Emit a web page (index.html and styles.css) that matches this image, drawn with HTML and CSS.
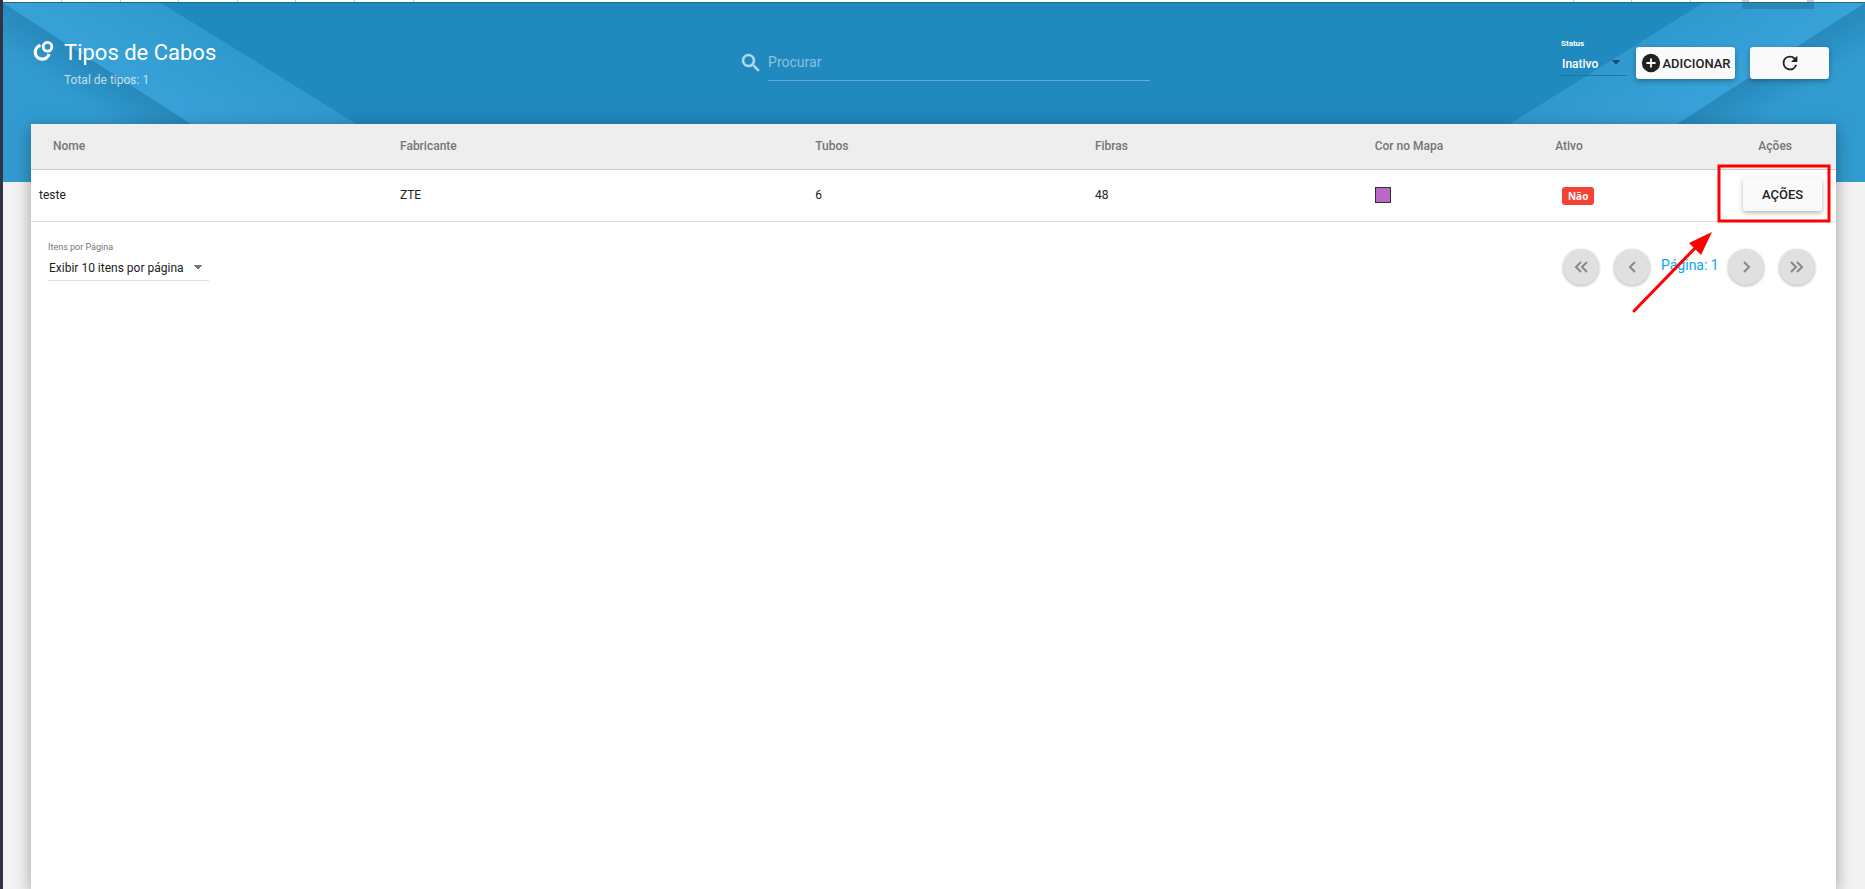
FILE: index.html
```html
<!DOCTYPE html>
<html lang="pt-BR">
<head>
<meta charset="utf-8">
<title>Tipos de Cabos</title>
<link rel="stylesheet" href="styles.css">
</head>
<body>
<div class="rail"></div>
<div class="page">
  <div class="strip">
    <svg width="420" height="2" aria-hidden="true"><path d="M58.500 0V2M117.500 0V2M175.500 0V2M234.500 0V2M292.500 0V2M351.500 0V2M410.500 0V2" stroke="#ccc"/></svg>
    <svg width="300" height="2" aria-hidden="true"><path d="M8.500 0V2M66.500 0V2M125.500 0V2" stroke="#ccc"/><path d="M177 0H184V2H177ZM242 0H249V2H242Z" fill="#ccc"/></svg>
  </div>
  <header class="hero">
    <svg class="band band-left" width="360" height="179" viewBox="0 0 360 179" aria-hidden="true">
      <defs>
        <linearGradient id="fold-l" gradientUnits="userSpaceOnUse" x1="95" y1="60" x2="71" y2="97">
          <stop offset="0" stop-color="#2788bb"/><stop offset="1" stop-color="#319bd0"/>
        </linearGradient>
        <linearGradient id="lit-l" gradientUnits="userSpaceOnUse" x1="250" y1="60" x2="205" y2="130">
          <stop offset="0" stop-color="#3099ce"/><stop offset="1" stop-color="#38a1d7"/>
        </linearGradient>
      </defs>
      <path d="M0 0H158L360 125V179H0Z" fill="url(#lit-l)"/>
      <path d="M0 0L278 179H0Z" fill="url(#fold-l)"/>
    </svg>
    <svg class="band band-right" width="360" height="179" viewBox="0 0 360 179" aria-hidden="true">
      <defs>
        <linearGradient id="fold-r" gradientUnits="userSpaceOnUse" x1="265" y1="60" x2="289" y2="97">
          <stop offset="0" stop-color="#2788bb"/><stop offset="1" stop-color="#319bd0"/>
        </linearGradient>
        <linearGradient id="lit-r" gradientUnits="userSpaceOnUse" x1="110" y1="60" x2="155" y2="130">
          <stop offset="0" stop-color="#3099ce"/><stop offset="1" stop-color="#38a1d7"/>
        </linearGradient>
      </defs>
      <path d="M360 0H198L0 124V179H360Z" fill="url(#lit-r)"/>
      <path d="M360 0L82 179H360Z" fill="url(#fold-r)"/>
      <path d="M237 0H309V6H237Z" fill="#2d86b5"/>
    </svg>
    <div class="brand">
      <svg class="logo" width="22" height="22" viewBox="0 0 22 22" fill="none" stroke="#fff" aria-hidden="true">
        <circle cx="14.500" cy="6.800" r="4.400" stroke-width="2.800"/>
        <path d="M7.500 5.400A7 7 0 1 0 16 14" stroke-width="3.200"/>
      </svg>
      <div class="titles">
        <h1>Tipos de Cabos</h1>
        <p>Total de tipos: 1</p>
      </div>
    </div>
    <div class="search">
      <svg width="24" height="24" viewBox="0 0 24 24" fill="#b9dbed" stroke="#b9dbed" stroke-width=".5" aria-hidden="true"><path d="M15.500 14h-.79l-.28-.27A6.471 6.471 0 0 0 16 9.500 6.500 6.500 0 1 0 9.500 16c1.610 0 3.090-.59 4.230-1.570l.27.28v.79l5 4.990L20.490 19l-4.990-5zm-6 0C7.010 14 5 11.990 5 9.500S7.010 5 9.500 5 14 7.010 14 9.500 11.990 14 9.500 14z"/></svg>
      <input type="text" placeholder="Procurar" aria-label="Procurar">
    </div>
    <div class="tools">
      <div class="status">
        <label for="status">Status</label>
        <select id="status"><option>Inativo</option><option>Ativo</option></select>
      </div>
      <button class="btn add" type="button">
        <svg width="22" height="22" viewBox="0 0 24 24" fill="#212121" aria-hidden="true"><path d="M12 2a10 10 0 1 0 0 20 10 10 0 0 0 0-20zm5 11h-4v4h-2v-4H7v-2h4V7h2v4h4z"/></svg>
        ADICIONAR
      </button>
      <button class="btn refresh" type="button" aria-label="Atualizar">
        <svg width="22" height="22" viewBox="0 0 24 24" fill="#212121" aria-hidden="true"><path d="M17.650 6.350A7.958 7.958 0 0 0 12 4a8 8 0 1 0 7.730 10h-2.080A6 6 0 1 1 12 6c1.660 0 3.140.69 4.220 1.780L13 11h7V4z"/></svg>
      </button>
    </div>
  </header>
  <main class="card">
    <table>
      <colgroup><col class="c-name"><col class="c-maker"><col class="c-num"><col class="c-num"><col class="c-color"><col class="c-color"><col></colgroup>
      <thead>
        <tr><th class="first">Nome</th><th>Fabricante</th><th>Tubos</th><th>Fibras</th><th>Cor no Mapa</th><th>Ativo</th><th class="last">Ações</th></tr>
      </thead>
      <tbody>
        <tr><td>teste</td><td>ZTE</td><td>6</td><td>48</td><td><span class="swatch"></span></td><td><span class="badge">Não</span></td><td class="last"><button class="btn actions" type="button">AÇÕES</button></td></tr>
      </tbody>
    </table>
    <div class="footer">
      <div class="per-page">
        <label for="per-page">Itens por Página</label>
        <select id="per-page"><option>Exibir 10 itens por página</option></select>
      </div>
      <nav class="pager">
        <button type="button" aria-label="Primeira"><svg width="24" height="24" viewBox="0 0 24 24"><path d="M12 7L7 12L12 17M18 7L13 12L18 17"/></svg></button>
        <button type="button" aria-label="Anterior"><svg width="24" height="24" viewBox="0 0 24 24"><path d="M15 7L10 12L15 17"/></svg></button>
        <span>Página: 1</span>
        <button type="button" aria-label="Próxima"><svg width="24" height="24" viewBox="0 0 24 24"><path d="M10 7L15 12L10 17"/></svg></button>
        <button type="button" aria-label="Última"><svg width="24" height="24" viewBox="0 0 24 24"><path d="M6 7L11 12L6 17M12 7L17 12L12 17"/></svg></button>
      </nav>
    </div>
    <svg class="mark" width="206" height="152" viewBox="0 0 206 152" aria-hidden="true">
      <rect x="89" y="4" width="110" height="55" fill="none" stroke="#f00" stroke-width="3"/>
      <path d="M4 149L68 83" stroke="#f00" stroke-width="3" stroke-linecap="round"/>
      <path d="M82 70L59 81L71 93Z" fill="#f00"/>
    </svg>
  </main>
</div>
</body>
</html>
```
FILE: styles.css
```css
* { box-sizing: border-box; }
body {
  margin: 0;
  min-height: 100vh;
  display: flex;
  background: #f3f3f3;
  color: #212121;
  font-family: Roboto, sans-serif;
  font-size: 12px;
}
.rail { width: 3px; background: #2f3343; }
.page { flex: 1; min-width: 0; display: flex; flex-direction: column; }
.strip { display: flex; justify-content: space-between; height: 3px; background: #fff; border-bottom: 1px solid #1b6a90; }
.hero {
  position: relative;
  height: 179px;
  padding: 0 36px 58px 30px;
  display: grid;
  grid-template-columns: 26fr 411px 25fr;
  background: #2089be;
  color: #fff;
}
.band { position: absolute; top: 0; }
.band-left { left: 0; }
.band-right { right: 0; }
.brand, .search, .tools { position: relative; display: flex; }
.brand { padding-top: 37px; gap: 9px; }
.titles h1 { margin: 0; font-size: 22px; line-height: 26px; font-weight: 400; }
.titles p { margin: 6px 0 0; line-height: 16px; opacity: .7; }
.search { padding-top: 46px; gap: 5px; align-items: flex-start; }
.search svg { margin-top: 2px; }
.search input {
  flex: 1;
  min-width: 0;
  height: 32px;
  padding: 0 0 6px;
  border: 0;
  border-bottom: 1px solid #62add4;
  background: none;
  color: #fff;
  font: 14px Roboto, sans-serif;
}
.search input::placeholder { color: #8bc2de; opacity: 1; }
.tools { justify-content: flex-end; align-items: flex-start; padding-top: 35px; }
.status, .per-page { display: flex; flex-direction: column; }
.status { width: 67px; margin-right: 9px; }
.status label { font-size: 8px; line-height: 12px; font-weight: 700; padding-left: 1px; }
select {
  appearance: none;
  border: 0;
  border-bottom: 1px solid #ddd;
  border-radius: 0;
  background: no-repeat;
  background-image: linear-gradient(to bottom left, #757575 50%, transparent 51%), linear-gradient(to bottom right, #757575 50%, transparent 51%);
  background-size: 4px 4px;
  font: 12px Roboto, sans-serif;
  color: #212121;
}
.status select {
  height: 26px;
  padding: 2px 0 0 2px;
  border-color: #1f76a3;
  background-image: linear-gradient(to bottom left, #174e6b 50%, transparent 51%), linear-gradient(to bottom right, #174e6b 50%, transparent 51%);
  background-position: right 11px top 10px, right 7px top 10px;
  color: #fff;
  font-weight: 500;
}
.btn {
  border: 0;
  border-radius: 3px;
  background: #fafafa;
  color: #212121;
  font: 500 13px Roboto, sans-serif;
  box-shadow: 0 2px 5px rgba(0, 0, 0, .3);
  display: inline-flex;
  align-items: center;
  justify-content: center;
  padding: 0;
}
.add { width: 99px; height: 32px; margin: 9px 15px 0 0; }
.refresh { width: 79px; height: 32px; margin-top: 9px; }
.card {
  position: relative;
  flex: 1;
  margin: -58px 29px 0 28px;
  background: #fff;
  box-shadow: 0 4px 16px rgba(0, 0, 0, .35);
}
table { width: 100%; table-layout: fixed; border-collapse: collapse; }
.c-name { width: 20%; }
.c-maker { width: 23%; }
.c-num { width: 15.500%; }
.c-color { width: 10%; }
th, td { padding: 0 0 0 8px; text-align: left; }
th { height: 45px; background: #eee; border-bottom: 1px solid #ccc; color: #757575; font-weight: 500; padding-bottom: 1px; }
th.first { padding-left: 22px; }
th.last { padding: 0 44px 1px 0; text-align: right; }
td { height: 52px; border-bottom: 1px solid #ddd; }
td.last { padding: 0 14px 2px 0; text-align: right; }
.swatch { display: block; width: 16px; height: 16px; border: 1px solid #333; background: #ba68c8; }
.badge {
  display: block;
  width: 32px;
  margin: 1px 0 0 7px;
  border-radius: 3px;
  background: #f44336;
  color: #fff;
  font: 700 10px/18px "Open Sans", sans-serif;
  text-align: center;
}
.actions { width: 79px; height: 33px; }
.footer { display: flex; justify-content: space-between; align-items: flex-start; padding: 17px 21px 0 17px; }
.per-page { width: 161px; }
.per-page label { font-size: 9px; line-height: 16px; color: #757575; }
.per-page select {
  height: 26px;
  padding: 2px 0 0 1px;
  background-position: right 11px top 10px, right 7px top 10px;
}
.pager { display: flex; align-items: center; padding-top: 10px; }
.pager button {
  width: 36px;
  height: 36px;
  padding: 0;
  display: flex;
  align-items: center;
  justify-content: center;
  border: 0;
  border-radius: 50%;
  background: #e0e0e0;
  box-shadow: 0 1px 3px rgba(0, 0, 0, .3);
}
.pager button + button { margin-left: 15px; }
.pager svg { fill: none; stroke: #888; stroke-width: 2; }
.pager span { width: 59px; margin: 0 8px 4px 11px; color: #03a9f4; font-size: 14px; }
.mark { position: absolute; top: 38px; right: 0; }
```
